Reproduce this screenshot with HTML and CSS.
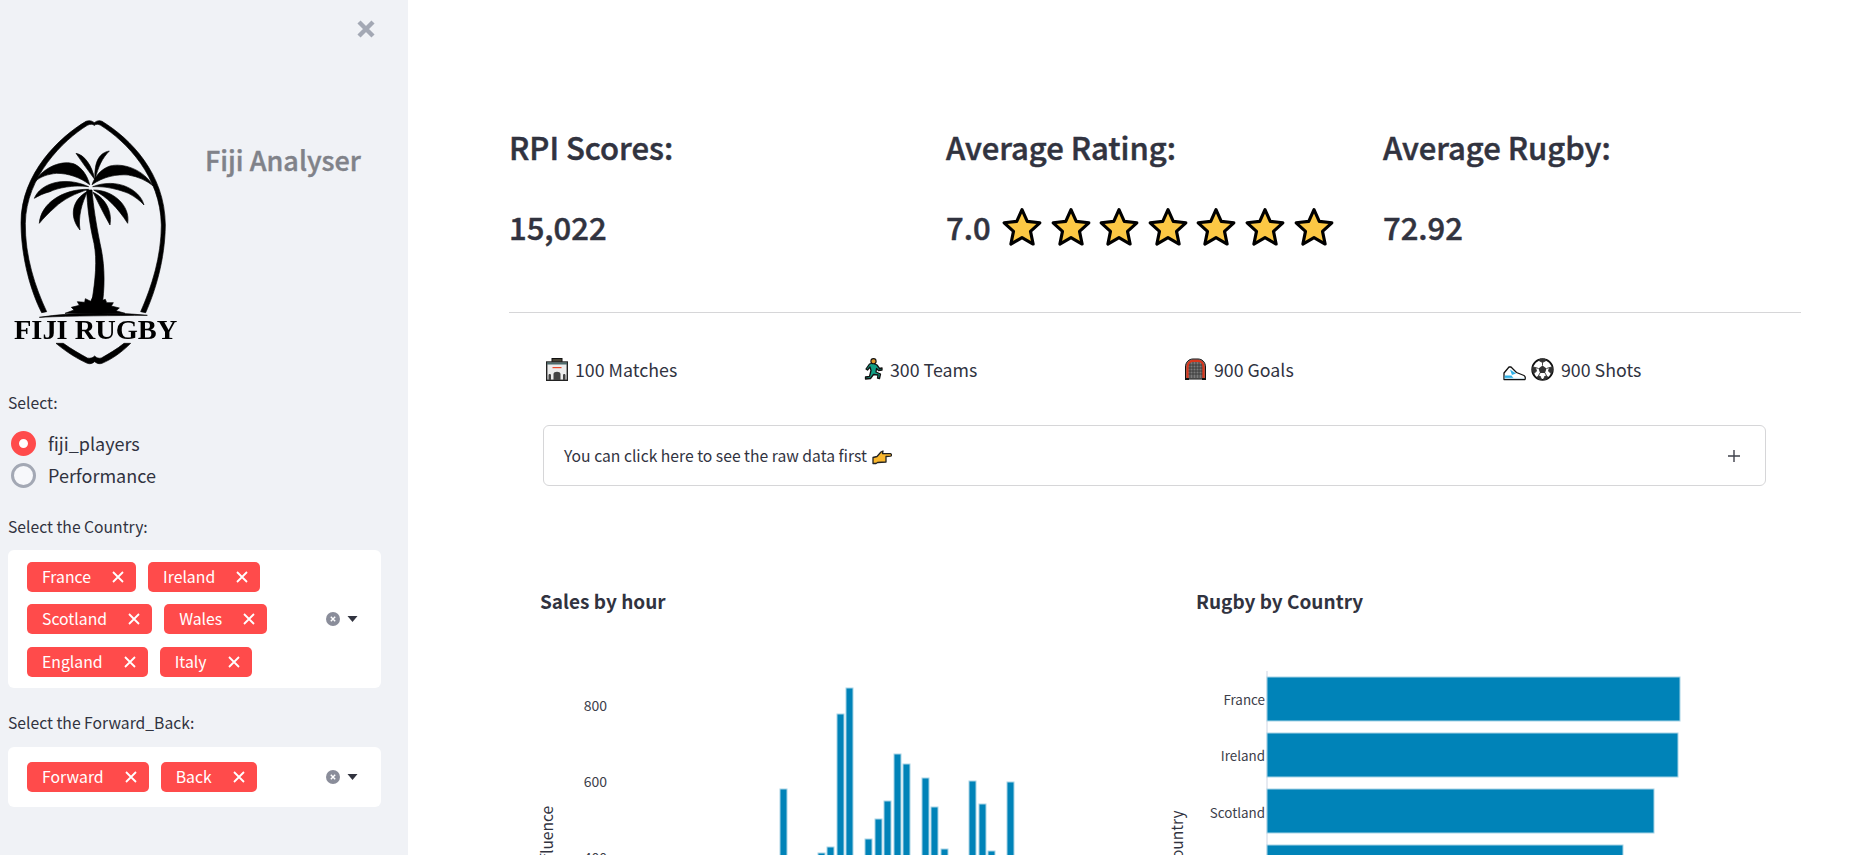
FILE: index.html
```html
<!DOCTYPE html>
<html lang="en">
<head>
<meta charset="utf-8">
<title>Fiji Analyser</title>
<link rel="stylesheet" href="styles.css">
</head>
<body>
<aside class="sidebar">
  <div class="close-row">
    <svg class="close" viewBox="0 0 18 18"><path d="M2 2 16 16M16 2 2 16"/></svg>
  </div>
  <div class="brand">
    <svg class="logo" viewBox="24 0 546 780">
      <g class="logo-ink">
        <path d="M283 38C275 32 268 30 258 34 180 80 62 190 63 340 64 450 95 550 125 608L140 605C105 530 75 440 76 340 78 200 190 90 262 46 270 42 278 42 283 46Z"/>
        <path d="M283 38C291 32 298 30 306 34 390 85 495 190 496 345 495 450 465 545 437 608L422 605C455 530 484 440 484 345 482 200 380 95 302 46 295 42 288 42 283 46Z"/>
        <path d="M168 700C200 727 235 748 262 760 270 763 278 760 284 755 290 760 298 763 306 760 335 748 365 727 392 700L372 700C350 718 325 732 304 744 296 746 290 744 284 738 278 744 270 746 262 744 240 732 215 718 190 700Z"/>
        <path d="M260 240C262 290 268 340 282 400 292 450 286 510 276 572L308 575C316 510 312 450 300 400 288 340 280 290 276 240Z"/>
        <path d="M228 130C252 134 276 165 284 208 266 184 246 156 228 130Z"/>
        <path d="M328 123C300 128 282 152 285 208 295 170 306 145 328 123Z"/>
        <path d="M105 215C130 170 190 148 225 163 246 174 262 196 269 224 240 202 205 190 170 190 145 192 120 200 105 215Z"/>
        <path d="M103 265C120 222 190 196 266 230 220 224 172 234 150 245 130 250 115 258 103 265Z"/>
        <path d="M118 340C122 280 190 236 266 238 226 250 190 268 165 292 145 310 130 325 118 340Z"/>
        <path d="M460 228C430 178 370 158 330 168 305 176 285 198 276 224 310 200 350 192 385 195 415 200 440 212 460 228Z"/>
        <path d="M432 285C420 238 350 202 278 230 320 228 360 240 385 250 405 260 420 272 432 285Z"/>
        <path d="M383 340C392 288 340 240 281 240 322 262 352 292 383 340Z"/>
        <path d="M240 360C206 320 216 268 263 244 245 280 234 320 240 360Z"/>
        <path d="M330 345C338 300 312 262 279 247 296 280 310 310 330 345Z"/>
        <path d="M195 610 222 600 214 592 238 586 232 575 254 577 256 566 272 574 278 562 285 572 292 562 300 574 316 568 320 578 340 578 334 588 358 594 348 602 375 610Z"/>
        <path d="M118 622C220 606 340 606 442 616 340 617 220 617 118 622Z"/>
      </g>
      <text class="logo-text" x="42" y="688" textLength="490" lengthAdjust="spacingAndGlyphs">FIJI RUGBY</text>
    </svg>
    <h1 class="brand-title">Fiji Analyser</h1>
  </div>

  <div class="label label-first">Select:</div>
  <div class="radios">
    <div class="radio-row"><span class="radio radio-on"></span><span>fiji_players</span></div>
    <div class="radio-row"><span class="radio"></span><span>Performance</span></div>
  </div>

  <div class="label">Select the Country:</div>
  <div class="multi">
    <div class="tags tags-wide">
      <span class="tag">France<svg class="x" viewBox="0 0 12 12"><path d="M1 1 11 11M11 1 1 11"/></svg></span>
      <span class="tag">Ireland<svg class="x" viewBox="0 0 12 12"><path d="M1 1 11 11M11 1 1 11"/></svg></span>
      <span class="tag">Scotland<svg class="x" viewBox="0 0 12 12"><path d="M1 1 11 11M11 1 1 11"/></svg></span>
      <span class="tag">Wales<svg class="x" viewBox="0 0 12 12"><path d="M1 1 11 11M11 1 1 11"/></svg></span>
      <span class="tag">England<svg class="x" viewBox="0 0 12 12"><path d="M1 1 11 11M11 1 1 11"/></svg></span>
      <span class="tag">Italy<svg class="x" viewBox="0 0 12 12"><path d="M1 1 11 11M11 1 1 11"/></svg></span>
    </div>
    <div class="multi-icons">
      <svg class="clear" viewBox="0 0 14 14"><circle cx="7" cy="7" r="7"/><path d="M4.8 4.8 9.2 9.2M9.2 4.8 4.8 9.2"/></svg>
      <svg class="caret" viewBox="0 0 10 6"><path d="M0 0H10L5 6Z"/></svg>
    </div>
  </div>

  <div class="label label-last">Select the Forward_Back:</div>
  <div class="multi multi-short">
    <div class="tags">
      <span class="tag">Forward<svg class="x" viewBox="0 0 12 12"><path d="M1 1 11 11M11 1 1 11"/></svg></span>
      <span class="tag">Back<svg class="x" viewBox="0 0 12 12"><path d="M1 1 11 11M11 1 1 11"/></svg></span>
    </div>
    <div class="multi-icons">
      <svg class="clear" viewBox="0 0 14 14"><circle cx="7" cy="7" r="7"/><path d="M4.8 4.8 9.2 9.2M9.2 4.8 4.8 9.2"/></svg>
      <svg class="caret" viewBox="0 0 10 6"><path d="M0 0H10L5 6Z"/></svg>
    </div>
  </div>
</aside>

<main class="main">
  <section class="kpis">
    <div>
      <h2 class="kpi-title">RPI Scores:</h2>
      <div class="kpi-value">15,022</div>
    </div>
    <div>
      <h2 class="kpi-title">Average Rating:</h2>
      <div class="kpi-value">7.0
        <span class="stars">
          <svg class="star" viewBox="0 0 40 40"><path d="M20 3.5 25 14.6 37 16 28.1 24.2 30.6 36.2 20 30.1 9.4 36.2 11.9 24.2 3 16 15 14.6Z"/></svg>
          <svg class="star" viewBox="0 0 40 40"><path d="M20 3.5 25 14.6 37 16 28.1 24.2 30.6 36.2 20 30.1 9.4 36.2 11.9 24.2 3 16 15 14.6Z"/></svg>
          <svg class="star" viewBox="0 0 40 40"><path d="M20 3.5 25 14.6 37 16 28.1 24.2 30.6 36.2 20 30.1 9.4 36.2 11.9 24.2 3 16 15 14.6Z"/></svg>
          <svg class="star" viewBox="0 0 40 40"><path d="M20 3.5 25 14.6 37 16 28.1 24.2 30.6 36.2 20 30.1 9.4 36.2 11.9 24.2 3 16 15 14.6Z"/></svg>
          <svg class="star" viewBox="0 0 40 40"><path d="M20 3.5 25 14.6 37 16 28.1 24.2 30.6 36.2 20 30.1 9.4 36.2 11.9 24.2 3 16 15 14.6Z"/></svg>
          <svg class="star" viewBox="0 0 40 40"><path d="M20 3.5 25 14.6 37 16 28.1 24.2 30.6 36.2 20 30.1 9.4 36.2 11.9 24.2 3 16 15 14.6Z"/></svg>
          <svg class="star" viewBox="0 0 40 40"><path d="M20 3.5 25 14.6 37 16 28.1 24.2 30.6 36.2 20 30.1 9.4 36.2 11.9 24.2 3 16 15 14.6Z"/></svg>
        </span>
      </div>
    </div>
    <div>
      <h2 class="kpi-title">Average Rugby:</h2>
      <div class="kpi-value">72.92</div>
    </div>
  </section>

  <hr class="rule">

  <section class="stats">
    <div class="stat">
      <svg class="ico" viewBox="0 0 22 23">
        <rect x="6" y="0.5" width="10" height="5" fill="#4a4436" stroke="#111"/>
        <rect x="0.7" y="4" width="20.6" height="18.3" fill="#ededed" stroke="#222" stroke-width="1.4"/>
        <rect x="1" y="4.5" width="20" height="2" fill="#4d6b6b"/>
        <rect x="6.5" y="9" width="9" height="1.2" fill="#e8492b"/>
        <path d="M2.500 22V17C2.500 15.500 5 15.500 5 17V22ZM7.500 22V16C7.500 13 14.500 13 14.500 16V22ZM17 22V17C17 15.500 19.500 15.500 19.500 17V22Z" fill="#444"/>
      </svg>
      <span>100 Matches</span>
    </div>
    <div class="stat">
      <svg class="ico ico-run" viewBox="0 0 19 22">
        <path d="M9 5 13 7 15.5 10.5 18 10 18 12 14.5 12.5 12.5 10.5 12 14 16.5 16 15.5 20.5 13.5 20 14 17 9.5 16.5 6.5 20.5 1.5 21 1.5 19 5.5 18.5 7 12.5 6 9 3.5 12 2 11 5.5 6Z" fill="#12a085" stroke="#111" stroke-width="1.3" stroke-linejoin="round"/>
        <circle cx="9.5" cy="3.2" r="2.6" fill="#e0982a" stroke="#111" stroke-width="1.1"/>
      </svg>
      <span>300 Teams</span>
    </div>
    <div class="stat">
      <svg class="ico ico-goal" viewBox="0 0 23 22">
        <path d="M1.500 21V9C1.500 4 5 1 9 1H14C18 1 21.500 4 21.500 9V21Z" fill="#7a7a7a" stroke="#111" stroke-width="1"/>
        <path d="M6 3V20M9 2V20M12 2V20M15 2V20M18 3V20M3 7H20M3 10H20M3 13H20M3 16H20" stroke="#333" stroke-width=".8"/>
        <path d="M3.500 21V9C3.500 5 6 2.800 9 2.800H14C17 2.800 19.500 5 19.500 9V21" fill="none" stroke="#d9361c" stroke-width="2.200"/>
        <path d="M1 21H5M18 21H22" stroke="#111" stroke-width="1.800"/>
      </svg>
      <span>900 Goals</span>
    </div>
    <div class="stat stat-shots">
      <svg class="ico ico-shoe" viewBox="0 0 23 16">
        <path d="M1 8 6 2 8 2 13.5 7.5 21 10.5C22.500 11.500 22.500 13 22 14.500H1Z" fill="#fff" stroke="#111" stroke-width="1.300" stroke-linejoin="round"/>
        <path d="M1.700 10.500 8.500 10.500 11 13.700H1.700Z" fill="#2fb2e8"/>
        <path d="M7 4.500 13 8.500 9 10Z" fill="#2fb2e8"/>
        <path d="M1.700 13.300H21.300" stroke="#cfe8f4" stroke-width="1"/>
      </svg>
      <svg class="ico ico-ball" viewBox="0 0 23 23">
        <circle cx="11.500" cy="11.500" r="10.300" fill="#fff" stroke="#111" stroke-width="1.800"/>
        <path d="M11.500 7.500 15.500 10.500 14 15H9L7.500 10.500Z" fill="#333"/>
        <path d="M8 2.500 11.500 4.500 15 2.500 14 1H9ZM1.500 9 4.500 9.500 5.500 13 3 15.500 1.500 13ZM21.500 9 18.500 9.500 17.500 13 20 15.500 21.500 13ZM6 19 9 18 10.500 21.500H8ZM17 19 14 18 12.500 21.500H15ZM11.500 7.500V4.500M15.500 10.500 18.500 9.500M14 15 16 18.500M9 15 7 18.500M7.500 10.500 4.500 9.500" fill="#333" stroke="#333" stroke-width=".9"/>
      </svg>
      <span>900 Shots</span>
    </div>
  </section>

  <div class="expander">
    <span class="expander-text">You can click here to see the raw data first
      <svg class="hand" viewBox="0 0 20 15"><path d="M1 14V8L5 7 9 2.500 11 1.500 10.500 4 18.500 4.200C19.800 4.500 19.800 6.500 18.500 6.700L14 7 14 12.500 5.500 13 4 14Z" fill="#f8b62d" stroke="#222" stroke-width="1.300" stroke-linejoin="round"/></svg>
    </span>
    <svg class="plus" viewBox="0 0 12 12"><path d="M6 0V12M0 6H12"/></svg>
  </div>

  <section class="charts">
    <div class="chart">
      <h3 class="chart-title chart-title-a">Sales by hour</h3>
      <svg class="plot" viewBox="530 614 620 241">
        <text class="tick" x="607" y="711" text-anchor="end">800</text>
        <text class="tick" x="607" y="787" text-anchor="end">600</text>
        <text class="tick" x="607" y="863" text-anchor="end">400</text>
        <text class="axis-title" transform="rotate(-90 553 873)" x="553" y="873">Influence</text>
        <rect class="bar" x="780" y="789" width="7" height="80"/>
        <rect class="bar" x="818" y="853" width="7" height="20"/>
        <rect class="bar" x="827" y="847" width="7" height="20"/>
        <rect class="bar" x="837" y="714" width="7" height="160"/>
        <rect class="bar" x="846" y="688" width="7" height="180"/>
        <rect class="bar" x="865" y="839" width="7" height="30"/>
        <rect class="bar" x="875" y="819" width="7" height="50"/>
        <rect class="bar" x="884" y="801" width="7" height="70"/>
        <rect class="bar" x="894" y="754" width="7" height="110"/>
        <rect class="bar" x="903" y="764" width="7" height="100"/>
        <rect class="bar" x="922" y="778" width="7" height="90"/>
        <rect class="bar" x="931" y="807" width="7" height="60"/>
        <rect class="bar" x="941" y="849" width="7" height="20"/>
        <rect class="bar" x="969" y="781" width="7" height="90"/>
        <rect class="bar" x="979" y="804" width="7" height="60"/>
        <rect class="bar" x="988" y="851" width="7" height="20"/>
        <rect class="bar" x="1007" y="782" width="7" height="90"/>
      </svg>
    </div>
    <div class="chart">
      <h3 class="chart-title chart-title-b">Rugby by Country</h3>
      <svg class="plot" viewBox="1150 614 650 241">
        <path class="axis" d="M1267 671V860"/>
        <text class="tick tick-cat" x="1265" y="705" text-anchor="end">France</text>
        <text class="tick tick-cat" x="1265" y="761" text-anchor="end">Ireland</text>
        <text class="tick tick-cat" x="1265" y="818" text-anchor="end">Scotland</text>
        <text class="axis-title" transform="rotate(-90 1183 869)" x="1183" y="869">Country</text>
        <rect class="bar" x="1267" y="677" width="413" height="44"/>
        <rect class="bar" x="1267" y="733" width="411" height="44"/>
        <rect class="bar" x="1267" y="789" width="387" height="44"/>
        <rect class="bar" x="1267" y="845" width="356" height="44"/>
      </svg>
    </div>
  </section>
</main>
</body>
</html>
```

FILE: styles.css
```css
* { box-sizing: border-box; }

html, body {
  margin: 0;
  height: 855px;
  overflow: hidden;
}

body {
  display: flex;
  background: #fff;
  color: #31333f;
  font-family: "Noto Sans CJK SC", "Noto Sans", sans-serif;
  font-size: 17.5px;
}

.sidebar {
  flex: 0 0 408px;
  height: 855px;
  overflow: hidden;
  padding-left: 8px;
  background: #f0f2f6;
}

.close-row {
  display: flex;
  justify-content: flex-end;
  height: 110px;
  padding: 20px 33px 0 0;
}

.close {
  width: 18px;
  height: 18px;
  fill: none;
  stroke: #a3a8b4;
  stroke-width: 4.4;
}

.brand {
  display: flex;
  height: 260px;
}

.logo {
  flex: 0 0 182px;
  width: 182px;
  height: 260px;
  filter: blur(0.4px);
}

.logo-ink {
  fill: #000;
  stroke: #000;
  stroke-width: 2;
}

.logo-text {
  font-family: "Liberation Serif", serif;
  font-weight: 700;
  font-size: 84px;
  fill: #000;
}

.brand-title {
  margin: 30px 0 0 15px;
  font-size: 27px;
  line-height: 40px;
  font-weight: 500;
  -webkit-text-stroke: 0.4px currentColor;
  color: #808289;
  white-space: nowrap;
}

.label {
  height: 20px;
  margin-top: 26px;
  font-size: 15.7px;
  line-height: 20px;
}

.label-first {
  height: 21px;
  margin-top: 22.5px;
}

.label-last {
  height: 21px;
  margin-top: 25px;
}

.radios { margin-top: 13.5px; }

.radio-row {
  display: flex;
  align-items: center;
  gap: 12px;
  height: 32px;
  padding-left: 3px;
  font-size: 18px;
}

.radio {
  flex: 0 0 25px;
  width: 25px;
  height: 25px;
  border: 3px solid #a3a8b4;
  border-radius: 50%;
  background: #f7f8fb;
}

.radio-on {
  border: 8.5px solid #ff4b4b;
  background: #fff;
}

.multi {
  display: flex;
  align-items: center;
  justify-content: space-between;
  width: 373px;
  height: 138px;
  margin-top: 13px;
  padding: 0 23px 0 19px;
  border-radius: 6px;
  background: #fff;
}

.multi-short {
  height: 60px;
  margin-top: 13px;
}

.tags {
  display: flex;
  flex-wrap: wrap;
  gap: 12.5px 12px;
}

.tags-wide { width: 260px; }

.tag {
  display: inline-flex;
  align-items: center;
  justify-content: space-between;
  gap: 21px;
  height: 30px;
  padding: 0 12px 1px 15px;
  border-radius: 5px;
  background: #ff4b4b;
  color: #fff;
  font-size: 15.8px;
  line-height: 29px;
}

.x {
  width: 12px;
  height: 12px;
  margin-top: 1px;
  fill: none;
  stroke: #fff;
  stroke-width: 1.8;
}

.multi-icons {
  display: flex;
  align-items: center;
  gap: 7px;
}

.clear {
  width: 14px;
  height: 14px;
}

.clear circle { fill: #8a8d9a; }

.clear path {
  fill: none;
  stroke: #fff;
  stroke-width: 1.4;
}

.caret {
  width: 11px;
  height: 6px;
  fill: #31333f;
}

.main {
  flex: 1;
  min-width: 0;
  height: 855px;
  overflow: hidden;
  padding: 123px 62px 0 101px;
}

.kpis {
  display: grid;
  grid-template-columns: 437px 437px 1fr;
}

.kpi-title {
  margin: 0;
  font-size: 31px;
  line-height: 48px;
  font-weight: 500;
  -webkit-text-stroke: 0.5px currentColor;
}

.kpi-value {
  display: flex;
  align-items: center;
  gap: 10.5px;
  height: 48px;
  margin-top: 32px;
  font-size: 31px;
  line-height: 48px;
  font-weight: 500;
  -webkit-text-stroke: 0.5px currentColor;
}

.stars {
  display: flex;
  gap: 6.6px;
}

.star {
  flex: none;
  width: 42px;
  height: 42px;
  fill: #fcc844;
  stroke: #000;
  stroke-width: 3;
  stroke-linejoin: round;
}

.rule {
  height: 1px;
  margin: 61px 0 0;
  border: 0;
  background: #d6d6d8;
}

.stats {
  display: grid;
  grid-template-columns: 318px 320px 319px 1fr;
  margin: 44px 0 0 37px;
}

.stat {
  display: flex;
  align-items: center;
  gap: 7px;
  height: 24px;
  font-size: 17.8px;
  line-height: 24px;
  white-space: nowrap;
}

.stat-shots { gap: 5px; }
.stat-shots span { margin-left: 2px; }

.ico {
  flex: none;
  width: 22px;
  height: 23px;
}

.ico-run { width: 19px; height: 22px; }
.ico-goal { width: 23px; height: 22px; }
.ico-shoe { width: 23px; height: 16px; margin-top: 8px; }
.ico-ball { width: 23px; height: 23px; }

.expander {
  display: flex;
  align-items: center;
  justify-content: space-between;
  width: 1223px;
  height: 61px;
  margin: 44px 0 0 34px;
  padding: 0 25px 0 20px;
  border: 1px solid #d6d6d8;
  border-radius: 6px;
  font-size: 15.7px;
}

.expander-text {
  display: flex;
  align-items: center;
  gap: 5px;
}

.hand {
  width: 20px;
  height: 16px;
  margin-top: 3px;
}

.plus {
  width: 12px;
  height: 12px;
  fill: none;
  stroke: #3f414b;
  stroke-width: 1.4;
}

.charts {
  display: grid;
  grid-template-columns: 620px 650px;
  margin: 103px 0 0 21px;
}

.chart-title {
  margin: 0;
  height: 25px;
  font-size: 19px;
  line-height: 24px;
  font-weight: 700;
}

.chart-title-a { padding-left: 10px; }
.chart-title-b { padding-left: 46px; }

.plot {
  display: block;
  width: 100%;
  height: 241px;
  font-family: "Noto Sans CJK SC", "Noto Sans", sans-serif;
}

.tick {
  font-size: 14px;
  fill: #3c3e4a;
}

.tick-cat { font-size: 13.4px; }

.axis-title {
  font-size: 15.5px;
  fill: #31333f;
}

.bar {
  fill: #0083b8;
  stroke: #a8d4e6;
  stroke-width: 1;
}

.axis {
  fill: none;
  stroke: #e6eaf1;
  stroke-width: 2;
}
```
